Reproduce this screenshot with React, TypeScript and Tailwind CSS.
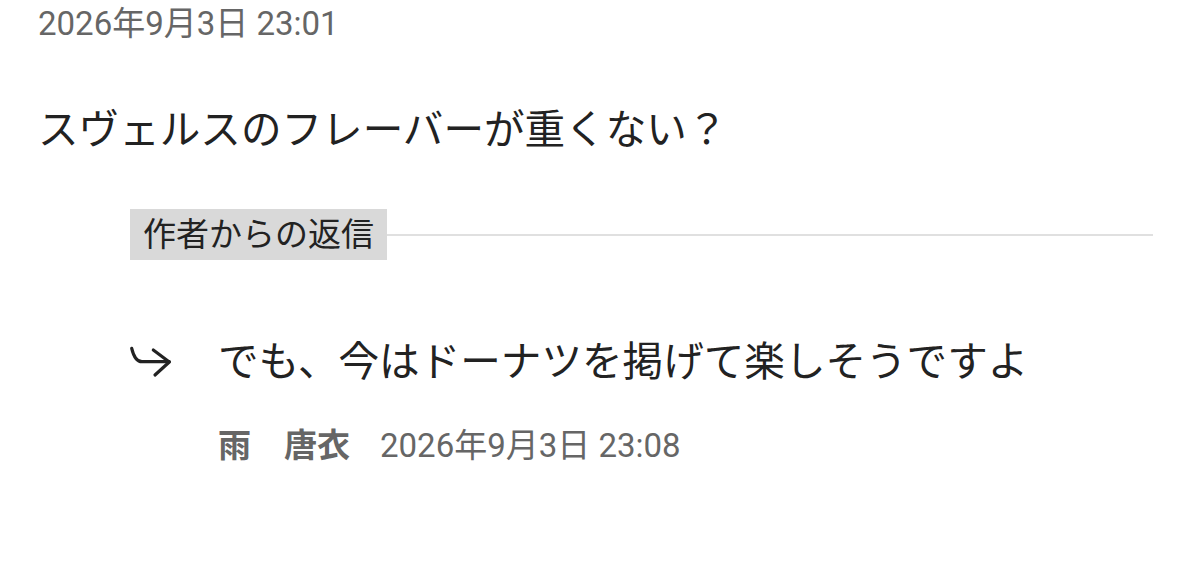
import React from "react";

export default function App() {
  const font = { fontFamily: "Roboto, 'Noto Sans CJK JP', sans-serif" };
  return (
    <div className="w-[1200px] h-[579px] bg-white overflow-hidden pl-[38px] pr-[47px]" style={font}>
      <div className="text-[33px] leading-[48px] text-[#666666]">2026年9月3日 23:01</div>
      <div className="mt-[52px] text-[40.6px] leading-[60px] text-[#222222]">スヴェルスのフレーバーが重くない？</div>
      <div className="mt-[49px] ml-[92px] flex items-center">
        <div className="h-[51px] bg-[#d9d9d9] px-[13px] flex items-center text-[33px] leading-[51px] text-[#222222]">
          作者からの返信
        </div>
        <div className="flex-1 h-[2px] bg-[#e0e0e0]" />
      </div>
      <div className="mt-[72px] ml-[90px] flex items-center">
        <svg width="44" height="34" viewBox="0 0 44 34" fill="none" stroke="#222222" strokeWidth="3.2" strokeLinecap="round" strokeLinejoin="round" className="shrink-0">
          <path d="M3.7 3.3 C 5.5 11, 8 16.7, 14 16.7 H41.3" />
          <path d="M25.3 5 L41.3 17 L27 30" />
        </svg>
        <div className="ml-[46px] text-[40.6px] leading-[60px] text-[#222222]">でも、今はドーナツを掲げて楽しそうですよ</div>
      </div>
      <div className="mt-[30px] ml-[180px] flex items-center leading-[48px] text-[#666666]">
        <span className="text-[33px] font-bold">雨　唐衣</span>
        <span className="ml-[30px] text-[33px]">2026年9月3日 23:08</span>
      </div>
    </div>
  );
}
